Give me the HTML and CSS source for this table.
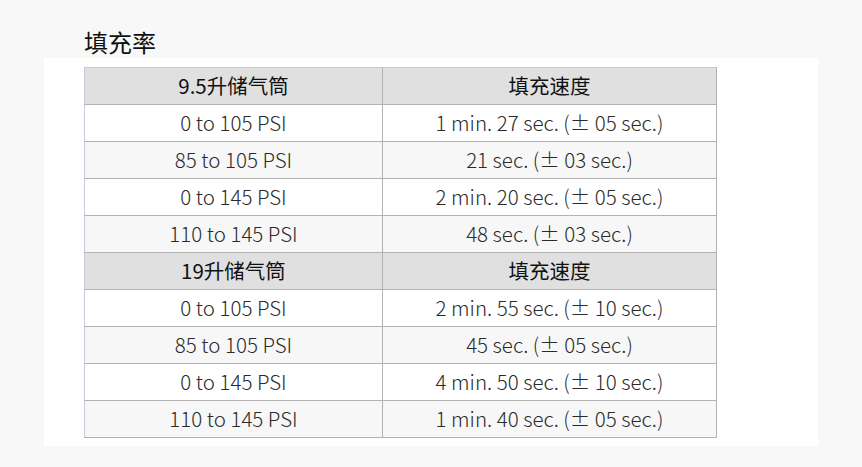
FILE: index.html
```html
<!DOCTYPE html>
<html lang="zh-CN">
<head>
<meta charset="utf-8">
<link rel="stylesheet" href="styles.css">
</head>
<body>
<h2 class="title">填充率</h2>
<div class="panel">
  <table class="rates">
    <tr class="head"><th class="c1">9.5升储气筒</th><th class="c2">填充速度</th></tr>
    <tr><td>0 to 105 PSI</td><td>1 min. 27 sec. (± 05 sec.)</td></tr>
    <tr class="alt"><td>85 to 105 PSI</td><td>21 sec. (± 03 sec.)</td></tr>
    <tr><td>0 to 145 PSI</td><td>2 min. 20 sec. (± 05 sec.)</td></tr>
    <tr class="alt"><td>110 to 145 PSI</td><td>48 sec. (± 03 sec.)</td></tr>
    <tr class="head"><th>19升储气筒</th><th>填充速度</th></tr>
    <tr><td>0 to 105 PSI</td><td>2 min. 55 sec. (± 10 sec.)</td></tr>
    <tr class="alt"><td>85 to 105 PSI</td><td>45 sec. (± 05 sec.)</td></tr>
    <tr><td>0 to 145 PSI</td><td>4 min. 50 sec. (± 10 sec.)</td></tr>
    <tr class="alt"><td>110 to 145 PSI</td><td>1 min. 40 sec. (± 05 sec.)</td></tr>
  </table>
</div>
</body>
</html>
```
FILE: styles.css
```css
html, body {
  margin: 0;
  padding: 0;
  background: #f8f8f8;
}
body {
  font-family: "Noto Sans CJK SC", "Noto Sans", sans-serif;
  color: #222;
}
.title {
  margin: 0;
  padding: 26px 0 0 84px;
  height: 32px;
  font-size: 24px;
  line-height: 32px;
  font-weight: 400;
  color: #111;
}
.panel {
  margin-left: 44px;
  width: 734px;
  background: #fff;
  padding: 9px 0 8px 40px;
}
.rates {
  border-collapse: collapse;
  width: 632px;
  table-layout: fixed;
  border-left: 1px solid #c3cbe0;
}
.rates th, .rates td {
  height: 34px;
  padding: 0 0 2px;
  border: 1px solid #b2b2b2;
  text-align: center;
  vertical-align: middle;
  font-size: 20.5px;
  line-height: 24px;
}
.rates td {
  font-weight: 200;
  color: #2a2a2a;
}
.rates th {
  font-weight: 400;
  color: #111;
}
.rates tr > :first-child {
  border-left: 1px solid #c3cbe0;
}
.rates tr:first-child th {
  border-top: 1px solid #c5ccd4;
}
.head {
  background: #e0e0e0;
}
.alt {
  background: #f7f7f7;
}
.c1 { width: 297px; }
.c2 { width: 333px; }
```
